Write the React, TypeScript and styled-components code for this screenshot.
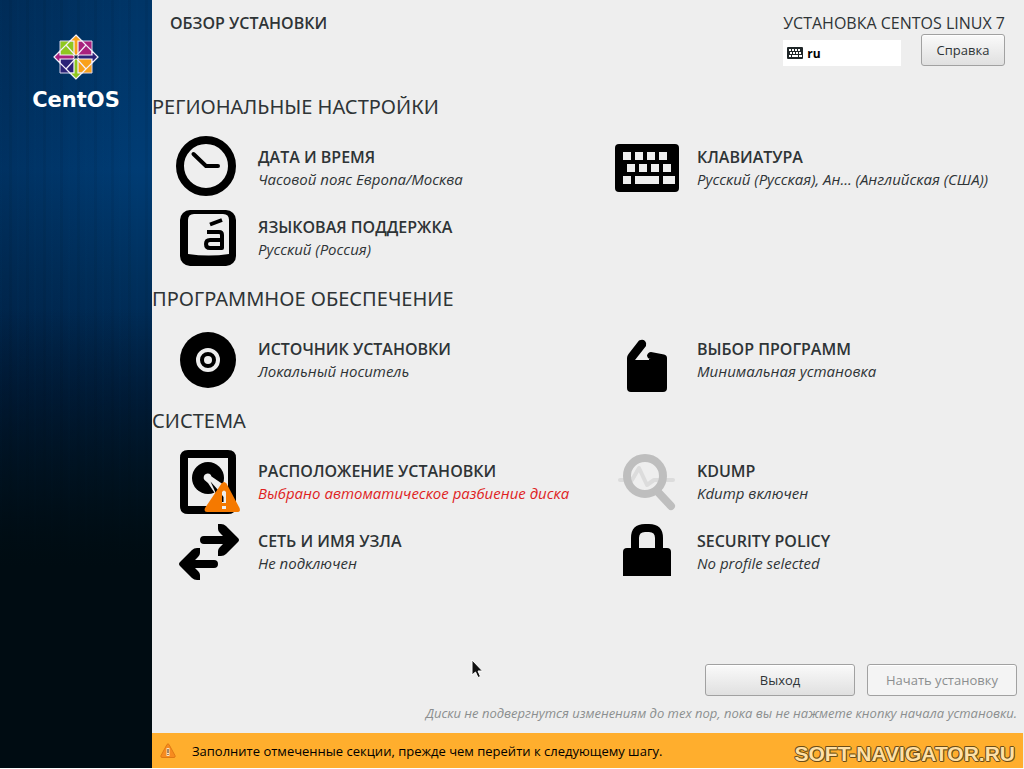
import React from "react";
import styled, { createGlobalStyle } from "styled-components";

const Global = createGlobalStyle`
  * { box-sizing: border-box; }
  body {
    margin: 0;
    background: #fff;
    color: #2e3436;
    font-family: "Open Sans", "Noto Sans", sans-serif;
    font-size: 13px;
  }
  h1, h2, p { margin: 0; font-weight: 400; }
  button { font-family: inherit; color: inherit; }
  svg { display: block; flex: none; }
`;

const Page = styled.div`
  display: flex;
  min-height: calc(100vh - 1px);
  margin-bottom: 1px;
`;

const Sidebar = styled.aside`
  flex: 0 0 152px;
  display: flex;
  flex-direction: column;
  align-items: center;
  padding-top: 34px;
  background:
    linear-gradient(180deg, transparent 0, transparent 40%, #000c12 74%),
    repeating-linear-gradient(90deg, rgba(0, 70, 120, 0.06) 0 2px, transparent 2px 9px, rgba(0, 0, 0, 0.05) 9px 12px, transparent 12px 17px),
    linear-gradient(90deg, rgba(0, 10, 30, 0.22), rgba(0, 10, 30, 0) 90%),
    linear-gradient(180deg, #003567 0, #003c74 22%, #00305d 36%, #00234a 52%, #001d38 64%, #000c12 78%);
`;

const Wordmark = styled.div`
  color: #fff;
  font-family: "DejaVu Sans", sans-serif;
  font-size: 21px;
  font-weight: 700;
  line-height: 24px;
  margin-top: 8px;
`;

const Main = styled.main`
  flex: 1;
  min-width: 0;
  display: flex;
  flex-direction: column;
  background: #eee;
`;

const Header = styled.header`
  display: flex;
  justify-content: space-between;
  min-height: 78px;
  padding: 12px 19px 0 18px;
`;

const PageTitle = styled.h1`
  font-size: 16px;
  font-weight: 600;
  line-height: 22px;
`;

const Product = styled.p`
  font-size: 16px;
  line-height: 22px;
`;

const HeaderTools = styled.div`
  display: flex;
  align-items: center;
  justify-content: space-between;
`;

const LayoutIndicator = styled.button`
  display: flex;
  align-items: center;
  gap: 4px;
  width: 118px;
  height: 26px;
  margin-top: 6px;
  padding: 0 4px;
  border: 0;
  background: #fff;
  color: #000;
  font-size: 12px;
  font-weight: 700;
`;

const Button = styled.button<{ $width: number }>`
  width: ${(p) => p.$width}px;
  height: 32px;
  padding: 0;
  border: 1px solid #a1a1a1;
  border-radius: 3px;
  background: linear-gradient(#fafafa, #e0e0e0);
  box-shadow: inset 0 1px #fff;
  font-size: 13px;

  &:disabled {
    background: #f4f4f4;
    color: #8b8e8f;
  }
`;

const Section = styled.section`
  padding-top: 15px;
`;

const SectionTitle = styled.h2`
  font-family: "Noto Sans", sans-serif;
  font-size: 20px;
  line-height: 28px;
`;

const SpokeGrid = styled.div`
  display: grid;
  grid-template-columns: 1fr 1fr;
  gap: 6px 30px;
  padding: 15px 0 0 24px;
`;

const Spoke = styled.button`
  display: flex;
  align-items: center;
  gap: 18px;
  min-width: 0;
  height: 64px;
  padding: 0;
  border: 0;
  background: none;
  text-align: left;
  white-space: nowrap;
`;

const SpokeText = styled.span`
  display: flex;
  flex-direction: column;
`;

const SpokeTitle = styled.span`
  font-size: 16px;
  font-weight: 600;
  line-height: 22px;
`;

const SpokeStatus = styled.span<{ $error?: boolean }>`
  font-size: 15px;
  font-style: italic;
  line-height: 22px;
  color: ${(p) => (p.$error ? "#df1f1f" : "inherit")};
`;

const Footer = styled.footer`
  display: flex;
  flex-direction: column;
  align-items: flex-end;
  gap: 6px;
  margin-top: auto;
  padding: 0 7px 9px;
`;

const Actions = styled.div`
  display: flex;
  gap: 12px;
`;

const Hint = styled.p`
  color: #8b8e8f;
  font-style: italic;
  line-height: 22px;
`;

const WarningBar = styled.div`
  display: flex;
  align-items: center;
  height: 35px;
  margin-right: 1px;
  padding: 0 8px;
  gap: 16px;
  background: #ffae2d;
  color: #000;
`;

const Message = styled.p`
  flex: 1;
  line-height: 20px;
`;

const Watermark = styled.span`
  padding-top: 6px;
  color: #ffe0a6;
  font-family: "Liberation Sans", sans-serif;
  font-size: 21px;
  font-weight: 700;
  line-height: 24px;
  text-shadow: 1px 0 #6b4c17, -1px 0 #6b4c17, 0 1px #6b4c17, 0 -1px #6b4c17,
    1px 1px #8d6824, -1px -1px #8d6824;
`;

const Pointer = styled.svg`
  position: absolute;
  left: 471px;
  top: 659px;
  pointer-events: none;
`;

const CentosLogo = () => (
  <svg width="46" height="46" viewBox="0 0 46 46" aria-hidden="true">
    <g stroke="#d9d2ea" strokeWidth="1">
      <path fill="#8fc71e" d="M7 7h15.5v15.5H7z" />
      <path fill="#a8217e" d="M23.5 7H39v15.5H23.5z" />
      <path fill="#2b2277" d="M7 23.5h15.5V39H7z" />
      <path fill="#f9a11b" d="M23.5 23.5H39V39H23.5z" />
    </g>
    <g stroke="#f4f0fa" strokeWidth="1.2">
      <path fill="#f9a11b" d="M23 1l6 6h-4v13l-2 2-2-2V7h-4z" />
      <path fill="#2b2277" d="M45 23l-6 6v-4H26l-2-2 2-2h13v-4z" />
      <path fill="#8fc71e" d="M23 45l-6-6h4V26l2-2 2 2v13h4z" />
      <path fill="#a8217e" d="M1 23l6-6v4h13l2 2-2 2H7v4z" />
      <path
        fill="none"
        d="M29 7l4 4-9 10M17 7l-4 4 9 10M39 29l-6 6-9-10M39 17l-6-6-9 10M17 39l-4-4 9-10M29 39l4-4-9-10M7 17l6-6 9 10M7 29l6 6 9-10"
      />
    </g>
    <path fill="#112a4a" d="M21.5 21.5h3v3h-3z" />
  </svg>
);

const icon = { width: 64, height: 64, viewBox: "0 0 64 64", "aria-hidden": true } as const;

const keys =
  "M8 16h8v8H8zM20 16h8v8h-8zM32 16h8v8h-8zM44 16h8v8h-8zM12 28h8v8h-8zM24 28h8v8h-8zM36 28h8v8h-8zM48 28h8v8h-8zM8 40h8v8H8zM20 40h24v8H20zM48 40h12v8H48z";

const KeyboardIcon = () => (
  <svg {...icon}>
    <rect y="8" width="64" height="48" rx="4" />
    <path fill="#eee" d={keys} />
  </svg>
);

const SmallKeyboardIcon = () => (
  <svg width="16" height="12" viewBox="0 8 64 48" aria-hidden="true">
    <rect y="8" width="64" height="48" rx="4" fill="#1f2628" />
    <path fill="#fff" d={keys} />
  </svg>
);

const ClockIcon = () => (
  <svg {...icon} fill="none" stroke="#000">
    <circle cx="30" cy="30" r="26" strokeWidth="8" />
    <path d="M17.5 18L30 30h12" strokeWidth="4" strokeLinecap="round" strokeLinejoin="round" />
  </svg>
);

const LanguageIcon = () => (
  <svg {...icon}>
    <rect x="4" y="4" width="56" height="56" rx="10" />
    <path fill="#eee" d="M18 8h29q6 0 6 6v34q-20 3-41 0V14q0-6 6-6z" />
    <path fill="none" stroke="#000" strokeWidth="4" strokeLinejoin="round" d="M31 26h12q3 0 3 3v13H34q-4 0-4-4t4-4h12" />
    <path fill="none" stroke="#000" strokeWidth="4" d="M34 18.5l12-4.500" />
  </svg>
);

const DiscIcon = () => (
  <svg {...icon}>
    <circle cx="32" cy="32" r="28" />
    <circle cx="32" cy="32" r="10" fill="none" stroke="#eee" strokeWidth="4" />
    <circle cx="32" cy="32" r="4" fill="#eee" />
  </svg>
);

const PackageIcon = () => (
  <svg {...icon}>
    <path d="M12 32h8L31 18q1-3-1-5t-6-.5L13.5 26Q12 28 12 30v30q0 4 4 4h32q4 0 4-4V30q0-3-3-3.500L36 24q-3 0-4 3.500.5 3.500 4 3.500h-2v1H12z" />
  </svg>
);

const DiskIcon = () => (
  <svg {...icon}>
    <path
      fillRule="evenodd"
      d="M12 0h40q8 0 8 8v48q0 8-8 8H12q-8 0-8-8V8q0-8 8-8zM12 8v48h40V8z"
    />
    <circle cx="32" cy="28" r="16" />
    <path fill="#eee" d="M28.5 30a4 4 0 1 1 7-3.500L48 35 42 48 32 33z" />
    <path d="M34.500 31.500L42 40v8z" />
    <path fill="#f57900" d="M45.500 33.500q2.500-3 5 0L63.500 58q1.500 4-2.500 4H31q-3.500 0-2-4z" />
    <path fill="#eee" d="M46 42q2-3 4 0v11h-4zM46 56h4v3h-4z" />
    <path d="M46 45l1.500 2v5H46z" />
  </svg>
);

const arrow =
  "M42 4h3q3 0 5 2l12 12q2 2 0 4L50 34q-2 2-5 2h-3v-5q0-2 2-4l3-3H28a4 4 0 0 1 0-8h19l-3-3q-2-2-2-4z";

const NetworkIcon = () => (
  <svg {...icon}>
    <path d={arrow} />
    <path d={arrow} transform="rotate(180 33 32)" />
  </svg>
);

const KdumpIcon = () => (
  <svg {...icon} fill="none">
    <path stroke="#dcdcdc" strokeWidth="4" strokeLinejoin="round" strokeLinecap="round" d="M5 30h12l7-12 8 17 7-5h19" />
    <circle cx="30" cy="26" r="18" stroke="#bebebe" strokeWidth="8" />
    <path stroke="#bebebe" strokeWidth="8" strokeLinecap="round" d="M42 41l14 15" />
  </svg>
);

const LockIcon = () => (
  <svg {...icon}>
    <path fill="none" stroke="#000" strokeWidth="8" d="M20 30V18q0-10 10-10h4q10 0 10 10v12" />
    <path d="M8 32q0-4 4-4h40q4 0 4 4v24H8z" />
  </svg>
);

const AlertIcon = () => (
  <svg width="16" height="16" viewBox="0 0 16 16" aria-hidden="true">
    <path fill="#f78b1f" stroke="#e07a14" d="M7 1.500q1-1.500 2 0l6 11q.6 2-1 2H2q-1.600 0-1-2z" />
    <path fill="#fbe3c0" d="M6.500 5h3v8h-3z" />
    <path fill="#4a2f14" d="M7.500 6h1v4h-1zM7.500 11h1v1h-1z" />
  </svg>
);

interface SpokeInfo {
  icon: React.ReactNode;
  title: string;
  status: string;
  error?: boolean;
}

const sections: { title: string; spokes: SpokeInfo[] }[] = [
  {
    title: "РЕГИОНАЛЬНЫЕ НАСТРОЙКИ",
    spokes: [
      { icon: <ClockIcon />, title: "ДАТА И ВРЕМЯ", status: "Часовой пояс Европа/Москва" },
      { icon: <KeyboardIcon />, title: "КЛАВИАТУРА", status: "Русский (Русская), Ан... (Английская (США))" },
      { icon: <LanguageIcon />, title: "ЯЗЫКОВАЯ ПОДДЕРЖКА", status: "Русский (Россия)" },
    ],
  },
  {
    title: "ПРОГРАММНОЕ ОБЕСПЕЧЕНИЕ",
    spokes: [
      { icon: <DiscIcon />, title: "ИСТОЧНИК УСТАНОВКИ", status: "Локальный носитель" },
      { icon: <PackageIcon />, title: "ВЫБОР ПРОГРАММ", status: "Минимальная установка" },
    ],
  },
  {
    title: "СИСТЕМА",
    spokes: [
      { icon: <DiskIcon />, title: "РАСПОЛОЖЕНИЕ УСТАНОВКИ", status: "Выбрано автоматическое разбиение диска", error: true },
      { icon: <KdumpIcon />, title: "KDUMP", status: "Kdump включен" },
      { icon: <NetworkIcon />, title: "СЕТЬ И ИМЯ УЗЛА", status: "Не подключен" },
      { icon: <LockIcon />, title: "SECURITY POLICY", status: "No profile selected" },
    ],
  },
];

export default function App() {
  return (
    <Page>
      <Global />
      <Sidebar>
        <CentosLogo />
        <Wordmark>CentOS</Wordmark>
      </Sidebar>
      <Main>
        <Header>
          <PageTitle>ОБЗОР УСТАНОВКИ</PageTitle>
          <div>
            <Product>УСТАНОВКА CENTOS LINUX 7</Product>
            <HeaderTools>
              <LayoutIndicator type="button">
                <SmallKeyboardIcon />
                ru
              </LayoutIndicator>
              <Button type="button" $width={84}>Справка</Button>
            </HeaderTools>
          </div>
        </Header>
        {sections.map((section) => (
          <Section key={section.title}>
            <SectionTitle>{section.title}</SectionTitle>
            <SpokeGrid>
              {section.spokes.map((spoke) => (
                <Spoke type="button" key={spoke.title}>
                  {spoke.icon}
                  <SpokeText>
                    <SpokeTitle>{spoke.title}</SpokeTitle>
                    <SpokeStatus $error={spoke.error}>{spoke.status}</SpokeStatus>
                  </SpokeText>
                </Spoke>
              ))}
            </SpokeGrid>
          </Section>
        ))}
        <Footer>
          <Actions>
            <Button type="button" $width={150}>Выход</Button>
            <Button type="button" $width={150} disabled>Начать установку</Button>
          </Actions>
          <Hint>Диски не подвергнутся изменениям до тех пор, пока вы не нажмете кнопку начала установки.</Hint>
        </Footer>
        <WarningBar>
          <AlertIcon />
          <Message>Заполните отмеченные секции, прежде чем перейти к следующему шагу.</Message>
          <Watermark>SOFT-NAVIGATOR.RU</Watermark>
        </WarningBar>
      </Main>
      <Pointer width="14" height="20" viewBox="0 0 14 20" aria-hidden="true">
        <path fill="#111" stroke="#fff" d="M1 1v15l3.500-3 2.500 5.500 2.500-1L7 12h4.500z" />
      </Pointer>
    </Page>
  );
}
